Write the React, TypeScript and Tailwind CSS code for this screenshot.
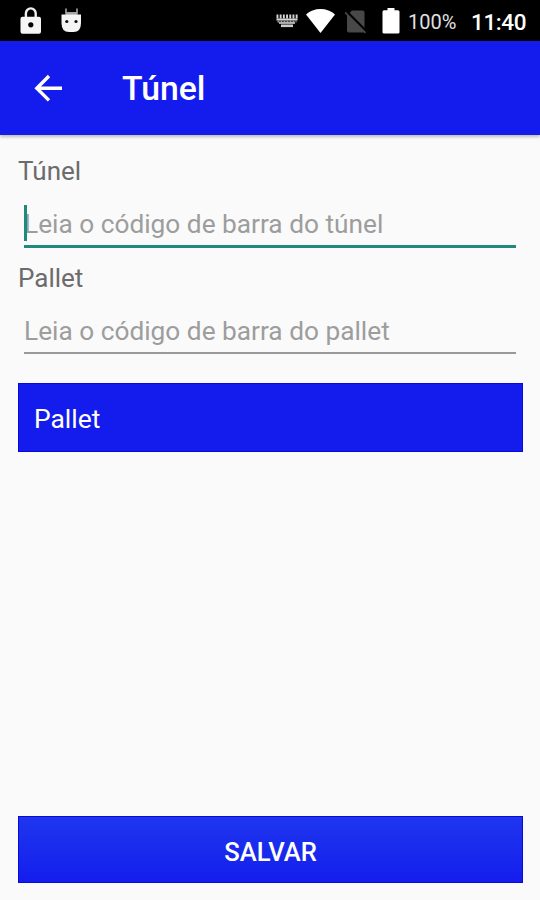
import type { ReactNode } from 'react';

interface FieldProps {
  label: string;
  placeholder: string;
  focused?: boolean;
}

function StatusBar() {
  return (
    <div className="flex h-[41px] shrink-0 items-center bg-black text-white">
      {/* Notifications */}
      <svg className="ml-[20px] h-[28px] w-[22px]" viewBox="0 0 22 28" fill="none">
        <path d="M5.900 11V6.300a4.900 4.900 0 0 1 9.800 0V11" stroke="#f0f0f0" strokeWidth="2.400" />
        <rect x="0.500" y="9.800" width="20.500" height="17" rx="2" fill="#f5f5f5" />
        <circle cx="10.800" cy="17.800" r="2.600" fill="#000" />
      </svg>
      <svg className="ml-[18px] h-[28px] w-[22px]" viewBox="0 0 22 28" fill="none">
        <path d="M6 1.500v5M17 1.500v5" stroke="#a5a5a5" strokeWidth="1.600" />
        <path d="M5.500 5h12v4h-12z" fill="#a5a5a5" />
        <path d="M1.500 7.500h19.500V16q0 9-7.500 9H9q-7.500 0-7.500-9z" fill="#f5f5f5" />
        <circle cx="6.800" cy="14.500" r="1.600" fill="#111" />
        <circle cx="16" cy="14.500" r="1.600" fill="#111" />
      </svg>

      {/* System icons */}
      <svg className="ml-auto h-[14px] w-[22px]" viewBox="0 0 22 14" fill="none">
        <path d="M.500 2.500h21.500" stroke="#d5d5d5" strokeWidth="4" strokeDasharray="1.900 1.300" />
        <path d="M.500 5.500h21" stroke="#d5d5d5" strokeWidth="2" />
        <path d="M1.500 7.500h19" stroke="#999" strokeWidth="2.200" strokeDasharray="2 1" />
        <path d="M3 9h16" stroke="#ddd" strokeWidth="1.500" />
        <path d="M5 11.800h12" stroke="#ccc" strokeWidth="2.600" />
      </svg>
      <svg className="ml-[8px] h-[26px] w-[29px]" viewBox="0 0 29 26" fill="#fff">
        <path d="M0 6.500Q6 1 14.500 1T29 6.500L14.500 25z" />
      </svg>
      <svg className="ml-[10px] h-[26px] w-[22px]" viewBox="0 0 22 26" fill="none">
        <path d="M7 2.500h10.500q2 0 2 2v18.500q0 1.500-1.500 1.500H4q-2 0-2-2V7.500z" fill="#484848" />
        <path d="M1 3l21 21" stroke="#000" strokeWidth="2.500" />
        <path d="M0 4.300l20.500 20.500" stroke="#484848" strokeWidth="1.800" />
      </svg>
      <svg className="ml-[15px] h-[26px] w-[18px]" viewBox="0 0 18 26" fill="#fff">
        <path d="M5.500 0h7v2.300H16q1.500 0 1.500 1.500v20.500q0 1.200-1.500 1.200H2q-1.500 0-1.500-1.200v-20.500q0-1.500 1.500-1.500h3.500z" />
      </svg>
      <span className="ml-[8px] mt-[2px] w-[49px] text-[20px] text-[#e0e0e0]">100%</span>
      <span className="ml-[14px] mr-[13px] mt-[4px] w-[56px] text-[22.500px] font-medium tracking-[-0.4px]">11:40</span>
    </div>
  );
}

function Field({ label, placeholder, focused = false }: FieldProps) {
  return (
    <div className="h-[107px]">
      <div className="h-[30px] text-[26px] leading-[29px] text-[#6c6c6c]">{label}</div>
      <div
        className={`relative ml-[6px] mr-[7px] border-[#999] pt-[20px] ${
          focused ? 'h-[61px] border-b-[3px] border-b-[#1f8a7b]' : 'h-[60px] border-b-2'
        }`}
      >
        <input
          className="block h-[36px] w-full bg-transparent text-[26.250px] outline-none placeholder:text-[#9d9d9d]"
          placeholder={placeholder}
        />
        {focused && <span className="absolute left-0 top-[18px] h-[36px] w-[3px] bg-[#1f8a7b]" />}
      </div>
    </div>
  );
}

function ListHeader({ children }: { children: ReactNode }) {
  return (
    <div className="mt-[12px] flex h-[69px] items-center border border-[#0a0ad8] bg-[#141ced] pl-[15px] pt-[5px] text-[26.400px] text-white">
      {children}
    </div>
  );
}

export default function App() {
  return (
    <div className="flex h-[900px] w-[540px] flex-col bg-[#fafafa] font-[Roboto,sans-serif]">
      <StatusBar />

      <header className="flex h-[94px] shrink-0 items-center bg-[#141ced] text-white shadow-[0_2px_3px_rgba(0,0,0,0.25)]">
        <svg className="ml-[34px] h-[28px] w-[28px]" viewBox="0 0 28 28" fill="none" stroke="#fff" strokeWidth="3.400">
          <path d="M28 14.200H3M15 2L2.800 14.200 15 26.400" />
        </svg>
        <h1 className="ml-[60px] mt-[2px] text-[33.750px] font-medium">Túnel</h1>
      </header>

      <main className="flex flex-1 flex-col pb-[17px] pl-[18px] pr-[17px] pt-[22px]">
        <Field label="Túnel" placeholder="Leia o código de barra do túnel" focused />
        <Field label="Pallet" placeholder="Leia o código de barra do pallet" />
        <ListHeader>Pallet</ListHeader>

        <button className="mt-auto h-[67px] w-full border border-[#0a0ad8] bg-linear-to-b from-[#1f35ee] to-[#141ced] pt-[6px] text-[25.600px] font-medium text-white">
          SALVAR
        </button>
      </main>
    </div>
  );
}
